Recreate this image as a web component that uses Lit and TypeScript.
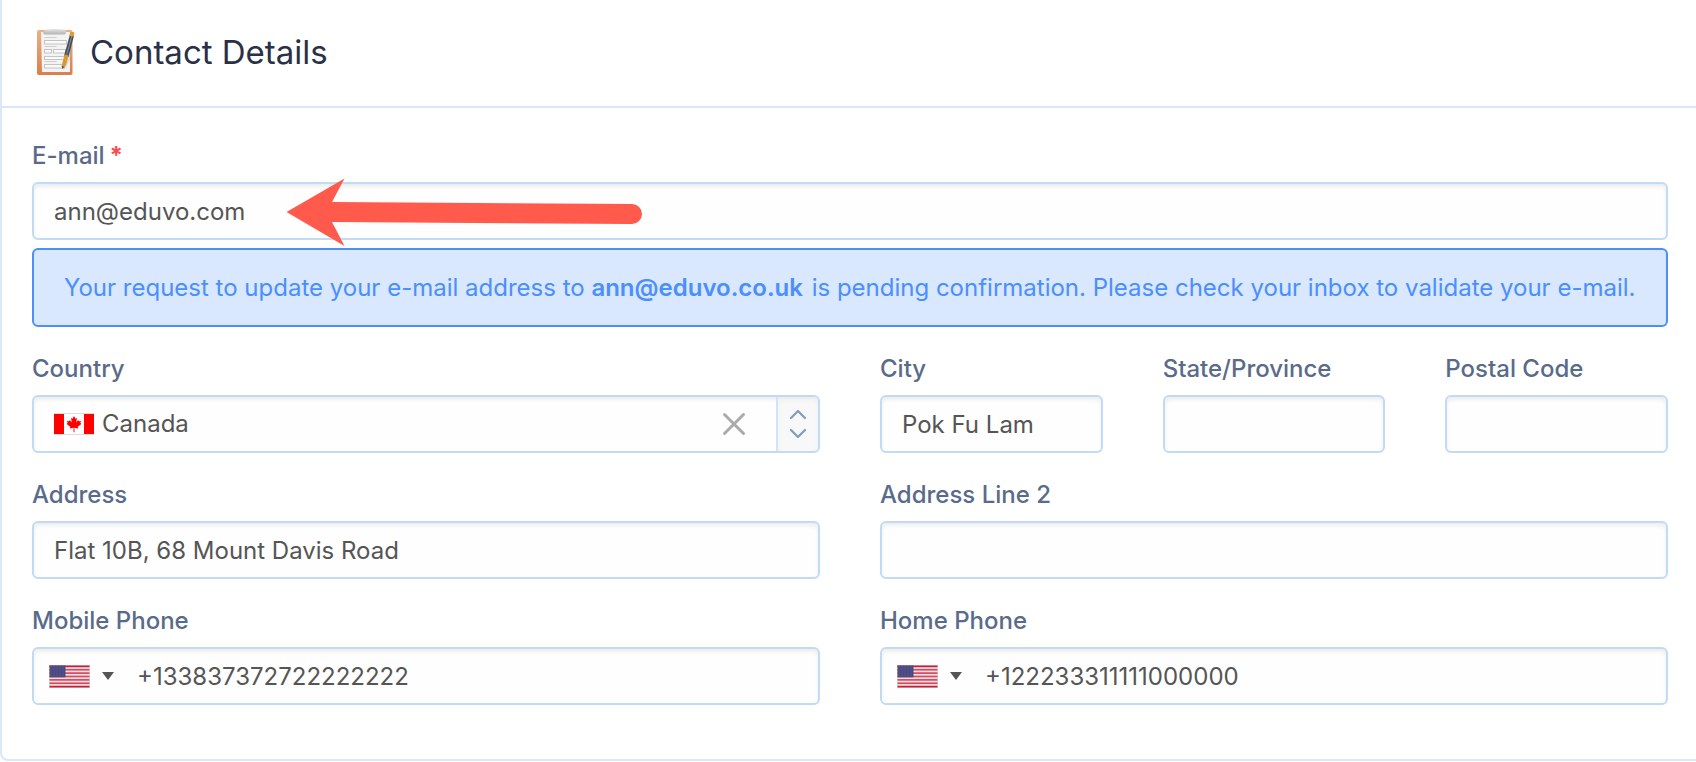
import { LitElement, html, css, svg } from "lit";
import { customElement, property } from "lit/decorators.js";

const stars = [0, 1, 2, 3, 4].flatMap((r) =>
  [0, 1, 2, 3, 4].map((c) => svg`<circle cx=${2 + c * 3} cy=${1.5 + r * 2.2} r="0.45" fill="#7c7aac"/>`)
);

const usFlag = html`<svg class="flag" width="41" height="23" viewBox="0 0 41 23" aria-hidden="true">
  <rect width="41" height="23" fill="#d8d8dc" />
  <rect x="0.5" y="0.5" width="40" height="22" fill="#f3dfe2" />
  ${[0, 1, 2, 3, 4, 5, 6].map((i) => svg`<rect x="0.5" y=${0.5 + i * 3.38} width="40" height="1.7" fill=${i === 0 || i === 6 ? "#bf2038" : "#d24c62"}/>`)}
  <rect x="0.5" y="0.5" width="16" height="11.8" fill="#4b4a80" />
  ${stars}
</svg>`;

const caFlag = html`<svg class="flag" width="40" height="22" viewBox="0 0 40 22" aria-hidden="true">
  <rect width="40" height="22" fill="#dcdcdc" />
  <rect y="1" width="40" height="20" fill="#fff" />
  <rect y="1" width="10" height="20" fill="#f00" />
  <rect x="30" y="1" width="10" height="20" fill="#f00" />
  <path fill="#f00" d="M20 3l1.5 2.8 1.5-.8-.8 4.3 2.2-2.2.5 1.2 2.2-.3-.8 2.1 1.2.7-3.8 3.2.5 1.4-3.8-.6.1 4.4h-1l.1-4.4-3.8.6.5-1.4-3.8-3.2 1.2-.7-.8-2.1 2.2.3.5-1.2 2.2 2.2-.8-4.3 1.5.8z" />
</svg>`;

const clipboard = html`<svg width="40" height="48" viewBox="0 0 40 48" aria-hidden="true">
  <defs>
    <linearGradient id="board" x1="0" y1="0" x2="0" y2="1">
      <stop offset="0" stop-color="#ebb08a" /><stop offset="1" stop-color="#dc7d48" />
    </linearGradient>
    <linearGradient id="clip" x1="0" y1="0" x2="0" y2="1">
      <stop offset="0" stop-color="#e4e4e4" /><stop offset="1" stop-color="#b2b2b2" />
    </linearGradient>
  </defs>
  <rect x="1" y="1" width="35.500" height="45" rx="2" fill="url(#board)" />
  <path d="M5 3h29v40H6z" fill="#f3f3f3" />
  <path d="M9 1.500q0-1 1-1h3q1-.5 3-.5h6q2 0 3 .5h4q1 0 1 1v2q0 2-2 2H9q-2 0-2-2z" fill="url(#clip)" />
  <path d="M8.500 8.500h12M8.500 17.500h12M8.500 32.500h12" stroke="#cfcfcf" />
  <g fill="#fafafa" stroke="#c4c4c4">
    <rect x="8.500" y="11.500" width="22" height="3.500" />
    <rect x="8.500" y="20.500" width="7" height="3.500" />
    <rect x="17.500" y="20.500" width="12" height="3.500" />
    <rect x="8.500" y="27.500" width="21" height="3" />
    <rect x="8.500" y="35.500" width="20" height="3.500" />
  </g>
  <path d="M32 20l4-12v18l-6 13-3 1z" fill="#aaa" opacity=".3" />
  <path d="M34 5.500l4 1L32.500 28l-4.500-1z" fill="#454e58" />
  <path d="M35.800 7l-5.300 19.500" stroke="#87919b" stroke-width="1" />
  <path d="M34.500 3q2.500-1 4 .8l-1.300 4-4-1z" fill="#e59a2d" />
  <path d="M28.500 25.500l4 1L30 36l-2.500 3-2-1.500z" fill="#dc9a2c" />
  <path d="M25.800 37l2.400.8-2 2.500z" fill="#55504a" />
</svg>`;

@customElement("phone-field")
export class PhoneField extends LitElement {
  @property() label = "";
  @property() value = "";

  static styles = css`
    :host { display: block; min-width: 0; }
    .label { display: block; font-weight: 500; line-height: 32px; margin-bottom: 10px; color: #5a6b8a; }
    .control {
      display: flex; align-items: center; height: 58px; box-sizing: border-box; padding: 0 15px;
      border: 2px solid #c2dbf5; border-radius: 6px; background: #fefefe;
      box-shadow: inset 0 3px 5px -1px #e8e8e8;
    }
    .dial { display: flex; align-items: center; gap: 12px; padding: 0; border: 0; background: none; }
    .flag { display: block; }
    .input { flex: 1; min-width: 0; height: 100%; margin-left: 23px; padding: 0; border: 0; outline: 0; background: none; font: inherit; color: #555; }
  `;

  render() {
    return html`
      <label class="label" for="number">${this.label}</label>
      <div class="control">
        <button class="dial" type="button" aria-label="Country code">
          ${usFlag}
          <svg width="12" height="8" viewBox="0 0 12 8" aria-hidden="true"><path d="M0 0h12L6 8z" fill="#555" /></svg>
        </button>
        <input class="input" id="number" type="tel" .value=${this.value} />
      </div>
    `;
  }
}

@customElement("app-root")
export class AppRoot extends LitElement {
  static styles = css`
    :host { display: block; font: 24px/30px Inter, "Liberation Sans", sans-serif; color: #555; background: #fff; }
    .card { border: 2px solid #dae7f8; border-width: 0 0 2px 2px; border-radius: 0 0 0 8px; }
    .header { display: flex; align-items: center; gap: 14px; height: 106px; padding-left: 34px; border-bottom: 2px solid #dae7f8; }
    .title { margin: 0; padding-bottom: 2px; font-size: 33px; line-height: 40px; font-weight: 400; color: #2a3147; }
    .form { display: grid; grid-template-columns: repeat(2, minmax(0, 1fr)); gap: 26px 60px; padding: 32px 28px 54px 30px; }
    .wide { grid-column: 1 / -1; }
    .triple { display: grid; grid-template-columns: repeat(3, minmax(0, 1fr)); gap: 60px; }
    .label { display: flex; gap: 5px; font-weight: 500; line-height: 32px; margin-bottom: 10px; color: #5a6b8a; }
    .required { color: #ff4b4b; font-weight: 700; }
    .input, .control {
      display: block; width: 100%; height: 58px; box-sizing: border-box; padding: 0 20px; margin: 0;
      border: 2px solid #c2dbf5; border-radius: 6px; outline: 0; background: #fefefe;
      box-shadow: inset 0 3px 5px -1px #e8e8e8; font: inherit; color: inherit;
    }
    .marked { position: relative; }
    .arrow { position: absolute; left: 254px; top: -4px; pointer-events: none; }
    .notice { margin: 8px 0 0; padding: 23px 16px 22px 30px; border: 2px solid #4a8ffb; border-radius: 6px; background: #d9e7ff; color: #4a8ffb; }
    .address { margin-right: 2px; font-weight: 600; }
    .control { display: flex; align-items: center; padding-right: 0; }
    .flag { display: block; }
    .select { flex: 1; min-width: 0; margin: 0; padding: 0 0 0 8px; border: 0; outline: 0; appearance: none; background: none; font: inherit; color: inherit; }
    .clear { padding: 0; margin-right: 30px; border: 0; background: none; display: flex; }
    .stepper {
      align-self: stretch; width: 42px; box-sizing: border-box; padding: 0; display: flex; align-items: center; justify-content: center;
      border: 0; border-left: 2px solid #d3e4f8; border-radius: 0 4px 4px 0; background: #f8f8f8; box-shadow: inset 0 3px 5px -1px #e8e8e8;
    }
  `;

  private field(id: string, label: string, value = "") {
    return html`<div>
      <label class="label" for=${id}>${label}</label>
      <input class="input" id=${id} type="text" .value=${value} />
    </div>`;
  }

  render() {
    return html`
      <section class="card">
        <header class="header">${clipboard}<h1 class="title">Contact Details</h1></header>
        <form class="form">
          <div class="wide">
            <label class="label" for="email">E-mail <span class="required">*</span></label>
            <div class="marked">
              <input class="input" id="email" type="email" .value=${"ann@eduvo.com"} />
              <svg class="arrow" width="358" height="70" viewBox="0 0 358 70" aria-hidden="true">
                <path d="M.5 34L58.500.5 46 24l300 2a10 10 0 0 1 0 20L46 44l12.500 24z" fill="#ff5a4c" />
              </svg>
            </div>
            <p class="notice">Your request to update your e-mail address to <strong class="address">ann@eduvo.co.uk</strong> is pending confirmation. Please check your inbox to validate your e-mail.</p>
          </div>
          <div>
            <label class="label" for="country">Country</label>
            <div class="control">
              ${caFlag}
              <select class="select" id="country"><option>Canada</option></select>
              <button class="clear" type="button" aria-label="Clear country">
                <svg width="24" height="24" viewBox="0 0 24 24" fill="none" stroke="#aaa" stroke-width="3" stroke-linecap="round"><path d="M2.500 2.500l19 19M21.500 2.500l-19 19" /></svg>
              </button>
              <button class="stepper" type="button" aria-label="Open country list">
                <svg width="18" height="30" viewBox="0 0 18 30" fill="none" stroke="#809bc0" stroke-width="2.200" stroke-linecap="round" stroke-linejoin="round"><path d="M2 9l7-7 7 7M2 21l7 7 7-7" /></svg>
              </button>
            </div>
          </div>
          <div class="triple">
            ${this.field("city", "City", "Pok Fu Lam")}
            ${this.field("state", "State/Province")}
            ${this.field("postal", "Postal Code")}
          </div>
          ${this.field("address", "Address", "Flat 10B, 68 Mount Davis Road")}
          ${this.field("address2", "Address Line 2")}
          <phone-field label="Mobile Phone" value="+133837372722222222"></phone-field>
          <phone-field label="Home Phone" value="+122233311111000000"></phone-field>
        </form>
      </section>
    `;
  }
}
